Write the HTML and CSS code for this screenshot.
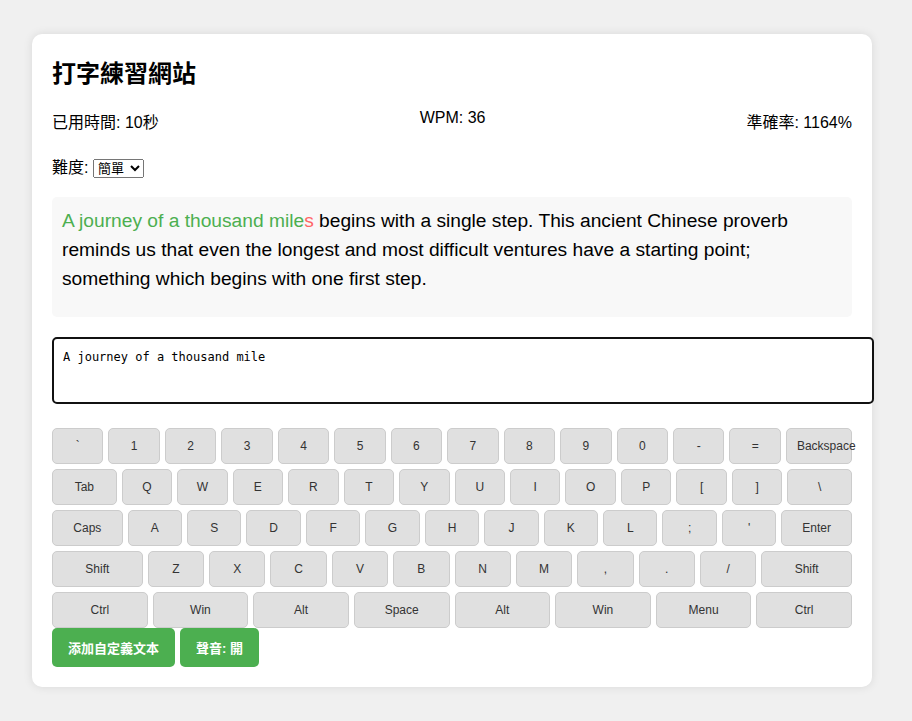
FILE: index.html
```html
<!DOCTYPE html>
<html lang="zh-Hant">
<head>
<meta charset="utf-8">
<title>打字練習網站</title>
<link rel="stylesheet" href="styles.css">
</head>
<body>
<div class="container">
  <h1 class="title">打字練習網站</h1>
  <div class="stats">
    <span>已用時間: 10秒</span>
    <span>WPM: 36</span>
    <span>準確率: 1164%</span>
  </div>
  <div class="difficulty">
    <label>難度: </label>
    <select class="select"><option>簡單</option><option>中等</option><option>困難</option></select>
  </div>
  <div class="text-display"><span class="correct">A journey of a thousand mile</span><span class="incorrect">s</span> begins with a single step. This ancient Chinese proverb reminds us that even the longest and most difficult ventures have a starting point; something which begins with one first step.</div>
  <textarea class="input">A journey of a thousand mile</textarea>
  <div class="keyboard">
    <div class="row">
      <div class="key">`</div><div class="key">1</div><div class="key">2</div><div class="key">3</div><div class="key">4</div><div class="key">5</div><div class="key">6</div><div class="key">7</div><div class="key">8</div><div class="key">9</div><div class="key">0</div><div class="key">-</div><div class="key">=</div><div class="key wide">Backspace</div>
    </div>
    <div class="row">
      <div class="key wide">Tab</div><div class="key">Q</div><div class="key">W</div><div class="key">E</div><div class="key">R</div><div class="key">T</div><div class="key">Y</div><div class="key">U</div><div class="key">I</div><div class="key">O</div><div class="key">P</div><div class="key">[</div><div class="key">]</div><div class="key wide">\</div>
    </div>
    <div class="row">
      <div class="key wide">Caps</div><div class="key">A</div><div class="key">S</div><div class="key">D</div><div class="key">F</div><div class="key">G</div><div class="key">H</div><div class="key">J</div><div class="key">K</div><div class="key">L</div><div class="key">;</div><div class="key">'</div><div class="key wide">Enter</div>
    </div>
    <div class="row">
      <div class="key shift">Shift</div><div class="key">Z</div><div class="key">X</div><div class="key">C</div><div class="key">V</div><div class="key">B</div><div class="key">N</div><div class="key">M</div><div class="key">,</div><div class="key">.</div><div class="key">/</div><div class="key shift">Shift</div>
    </div>
    <div class="row">
      <div class="key">Ctrl</div><div class="key">Win</div><div class="key">Alt</div><div class="key">Space</div><div class="key">Alt</div><div class="key">Win</div><div class="key">Menu</div><div class="key">Ctrl</div>
    </div>
  </div>
  <div class="actions">
    <button class="btn">添加自定義文本</button>
    <button class="btn">聲音: 開</button>
  </div>
</div>
</body>
</html>
```
FILE: styles.css
```css
html, body {
  margin: 0;
  padding: 0;
}
body {
  background: #f0f0f0;
  font-family: "Liberation Sans", Arial, "Noto Sans CJK TC", sans-serif;
  color: #000;
  padding: 34px 0 34px 32px;
}
.container {
  width: 800px;
  padding: 20px;
  background: #fff;
  border-radius: 10px;
  box-shadow: 0 0 10px rgba(0, 0, 0, 0.1);
}
.title {
  font-size: 24px;
  font-weight: bold;
  margin: 0 0 20px 0;
}
.stats {
  display: flex;
  justify-content: space-between;
  font-size: 16px;
  margin-bottom: 21px;
}
.difficulty {
  font-size: 16px;
  margin-bottom: 19px;
}
.select {
  font-family: "Liberation Sans", Arial, "Noto Sans CJK TC", sans-serif;
  font-size: 13px;
  width: 51px;
}
.text-display {
  font-size: 19.2px;
  line-height: 1.5;
  padding: 10px;
  min-height: 100px;
  background: #f8f8f8;
  border-radius: 5px;
  margin-bottom: 20px;
}
.correct {
  color: #4caf50;
}
.incorrect {
  color: #ff6666;
}
.input {
  display: block;
  width: 800px;
  height: 45px;
  padding: 11px 9px 7px 9px;
  border: 2px solid #111;
  border-radius: 5px;
  font-family: "DejaVu Sans Mono", monospace;
  font-size: 12px;
  resize: none;
  outline: none;
  margin-bottom: 24px;
  box-sizing: content-box;
}
.keyboard {
  display: flex;
  flex-direction: column;
  gap: 5px;
}
.row {
  display: flex;
  gap: 5px;
}
.key {
  flex: 1 1 0;
  min-width: 0;
  height: 34px;
  line-height: 34px;
  padding: 0 10px;
  background: #e0e0e0;
  border: 1px solid #ccc;
  border-radius: 5px;
  text-align: center;
  font-size: 12px;
  color: #333;
  white-space: nowrap;
}
.key.wide {
  flex-grow: 1.5;
}
.key.shift {
  flex-grow: 2;
}
.actions {
  display: flex;
  gap: 5px;
}
.btn {
  background: #4caf50;
  color: #fff;
  border: none;
  border-radius: 5px;
  padding: 10px 16px;
  font-family: "Liberation Sans", Arial, "Noto Sans CJK TC", sans-serif;
  font-size: 13px;
  font-weight: bold;
  cursor: pointer;
}
```
